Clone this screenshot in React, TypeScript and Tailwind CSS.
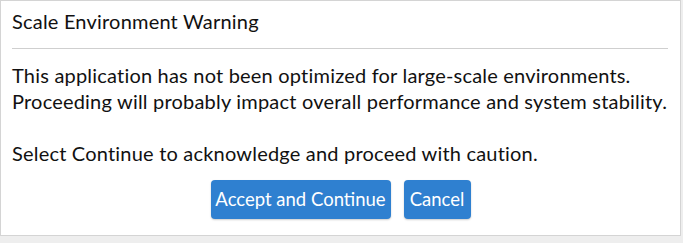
export default function App() {
  return (
    <div className="w-[683px] h-[243px] bg-[#eeeeee] font-['Lato','Liberation_Sans',sans-serif] text-[#111]">
      <div className="w-[681px] h-[236px] bg-white border border-[#d4d4d4] px-[11px]">
        <div className="h-[40px] flex items-center text-[20px] tracking-[0.2px]">Scale Environment Warning</div>
        <div className="mt-[7px] border-t border-[#cfcfcf] mr-[1px]" />
        <div className="mt-[13px] text-[20px] leading-[26px] tracking-[0.2px]">
          <p>This application has not been optimized for large-scale environments.</p>
          <p>Proceeding will probably impact overall performance and system stability.</p>
          <p className="mt-[26px]">Select Continue to acknowledge and proceed with caution.</p>
        </div>
        <div className="mt-[14px] flex justify-center gap-[13px] text-[18.5px] text-white">
          <button className="h-[39px] w-[180px] rounded-[4px] bg-[#2f80d0] shadow-[0_1px_2px_rgba(0,0,0,0.2)]">
            Accept and Continue
          </button>
          <button className="h-[39px] w-[67px] rounded-[4px] bg-[#2f80d0] shadow-[0_1px_2px_rgba(0,0,0,0.2)]">
            Cancel
          </button>
        </div>
      </div>
    </div>
  );
}
